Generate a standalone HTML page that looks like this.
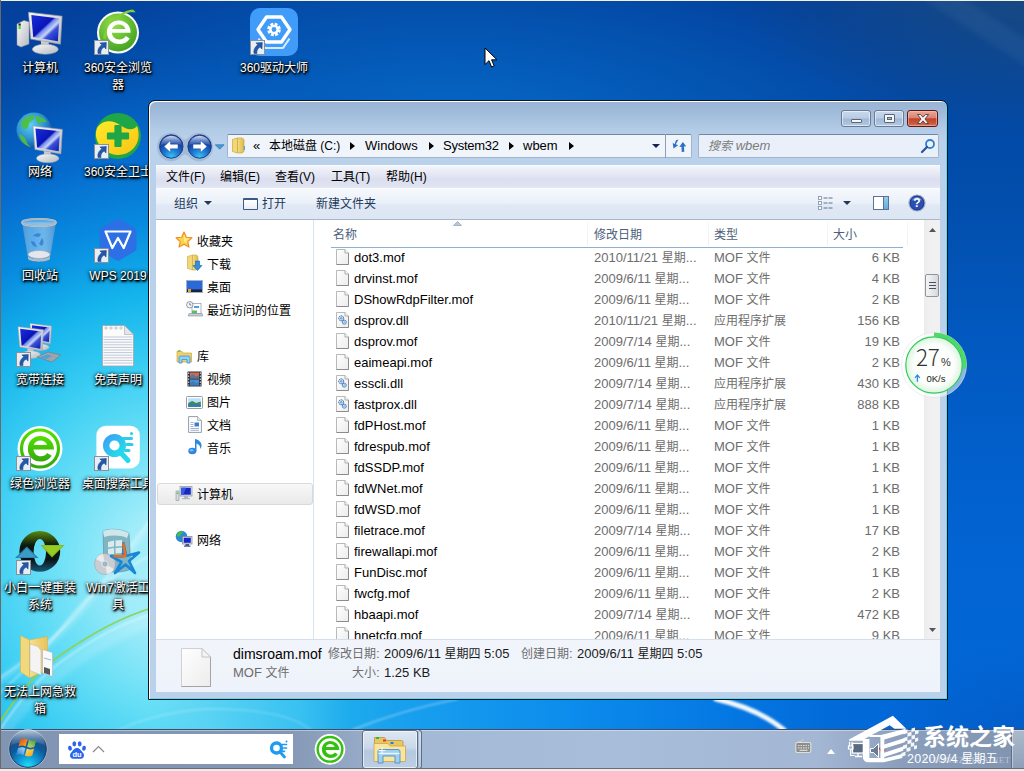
<!DOCTYPE html>
<html lang="zh-CN">
<head>
<meta charset="utf-8">
<title>wbem</title>
<style>
*{box-sizing:border-box;margin:0;padding:0}
html,body{width:1024px;height:771px;overflow:hidden}
body{position:relative;font-family:"Liberation Sans","Noto Sans CJK SC",sans-serif;font-size:13px;color:#000;background:#0a5cc0}
i{font-style:normal;font-size:12px}
.abs{position:absolute}
#wall{position:absolute;left:0;top:0;width:1024px;height:771px;
background:
  radial-gradient(ellipse 220px 130px at 1070px 770px, rgba(2,78,176,.6) 0%, rgba(2,78,176,0) 100%),
  radial-gradient(ellipse 320px 150px at 1050px -20px, rgba(30,76,120,.85) 0%, rgba(30,76,120,0) 100%),
  radial-gradient(circle 525px at 190px 570px, rgba(170,240,250,1) 0%, rgba(160,236,250,1) 13.300%, rgba(105,223,246,1) 26.700%, rgba(58,205,243,1) 40%, rgba(20,180,236,1) 53.300%, rgba(8,140,224,.97) 66.700%, rgba(6,110,210,.85) 80%, rgba(4,92,190,.4) 93%, rgba(4,88,186,0) 100%),
  radial-gradient(ellipse 480px 220px at 450px 150px, rgba(6,110,205,.9) 0%, rgba(6,110,205,0) 100%),
  linear-gradient(180deg, rgb(3,64,156) 0px, rgb(3,72,164) 100px, rgb(2,78,172) 200px, rgb(2,88,190) 330px, rgb(2,92,198) 400px, rgb(2,100,210) 550px, rgb(2,103,215) 730px);}
/* desktop icons */
.dl{position:absolute;margin-top:0;width:100px;text-align:center;color:#fff;font-size:12px;line-height:17px;
 text-shadow:1px 1px 1px #000,1px 2px 2px rgba(0,0,0,.9),0 0 3px rgba(0,0,0,.85),0 1px 4px rgba(0,0,0,.7);white-space:nowrap}
.dl i{font-size:12px}
.ico{position:absolute;overflow:visible}
/* window */
#win{position:absolute;left:148px;top:100px;width:800px;height:600px;border:1px solid #0c1420;border-radius:7px 7px 0 0;
 background:linear-gradient(180deg,#98b3d3 0px,#a3bedc 14px,#b2cbe6 28px,#b9d1ea 40px,#b9d1ea 100%);
 box-shadow:inset 1px 1px 0 #fdfeff, inset -1px -1px 0 #4fe0f8;overflow:hidden}
#win .cb{position:absolute;top:9px;width:30px;height:17px;border:1px solid #6a7a92;border-radius:3px;
 background:linear-gradient(180deg,#c8d9ec 0%,#b8cce4 48%,#9fb8d6 52%,#b3c9e2 100%);box-shadow:inset 0 0 0 1px rgba(255,255,255,.55)}
#win .cb.x{border-color:#5a1a14;background:linear-gradient(180deg,#e8a99c 0%,#d98472 45%,#c3432a 52%,#c8553a 80%,#d8745a 100%);box-shadow:inset 0 0 0 1px rgba(255,200,190,.5)}
#addr{position:absolute;left:78px;top:33px;width:465px;height:24px;border:1px solid #a4b3c8;border-top-color:#76869e;border-radius:2px;background:#f0f5fc}
#addr span{position:absolute;top:3px;line-height:16px;white-space:nowrap;color:#000}
#addr .ar{position:absolute;top:6.500px;width:0;height:0;border-left:5px solid #000;border-top:4.500px solid transparent;border-bottom:4.500px solid transparent}
#srch{position:absolute;left:549px;top:33px;width:241px;height:24px;border:1px solid #a4b3c8;border-top-color:#76869e;border-radius:2px;background:#e9f0f9}
#menu{position:absolute;left:7px;top:64px;width:784px;height:23px;border-top:1px solid #fbfcfe;
 background:linear-gradient(180deg,#f3f5fb 0%,#e6e9f4 35%,#dcdfef 60%,#dde1f0 80%,#e3e8f4 100%)}
#menu span{position:absolute;top:3px;line-height:16px;white-space:nowrap;font-size:12px}
#tool{position:absolute;z-index:2;left:7px;top:87px;width:784px;height:32px;border-top:1px solid #fafcfe;border-bottom:1px solid #a9b7c9;
 background:linear-gradient(180deg,#f6f9fd 0%,#ebf1f9 45%,#dfe8f4 55%,#dde7f3 100%)}
#tool span{position:absolute;top:7.400px;line-height:16px;color:#1e395b;white-space:nowrap}
#cont{position:absolute;left:7px;top:118px;width:784px;height:420px;background:#fff;overflow:hidden}
#nav{position:absolute;left:0;top:0;width:158px;height:420px;background:#fff;border-right:1px solid #d6e5f5}
#nav span{position:absolute;line-height:16px;white-space:nowrap;margin-top:1px}
#list{position:absolute;left:159px;top:0;width:609px;height:420px;overflow:hidden}
#list .hd{position:absolute;top:8px;line-height:16px;color:#4c607a}
#list .vs{position:absolute;top:2px;width:1px;height:24px;background:linear-gradient(180deg,#f8fafc,#e9eef4)}
.row{position:absolute;left:0;width:609px;height:21px;line-height:22px;white-space:nowrap}
.row .fi{position:absolute;left:21px;top:2px}
.row .fn{position:absolute;left:39px;top:0;color:#000}
.row .fd{position:absolute;left:279px;top:0;color:#6d6d6d}
.row .ft{position:absolute;left:399px;top:0;color:#6d6d6d}
.row .fs{position:absolute;right:24px;top:0;color:#6d6d6d}
#sb{position:absolute;left:768px;top:0;width:16px;height:420px;background:linear-gradient(90deg,#ececec 0,#f0f0f0 30%,#f1f1f1 100%)}
#det{position:absolute;left:7px;top:538px;width:784px;height:53px;border-top:1px solid #d5dfec;background:linear-gradient(180deg,#f1f5fb 0%,#eef2fa 100%)}
#det span{position:absolute;line-height:16px;white-space:nowrap;margin-top:1px}
/* taskbar */
#task{position:absolute;left:0;top:729px;width:1024px;height:39px;border-top:1px solid #3f4e66;
 background:linear-gradient(90deg,#8195b2 0%,#8498b5 28%,#a4b9d6 41%,#a8bdda 60%,#a3b7d4 80%,#8b9fbc 88%,#8094b0 100%)}
#task:before{content:"";position:absolute;left:0;top:0;width:100%;height:1px;background:rgba(255,255,255,.4)}

#srch i{font-style:italic}
#bstrip{position:absolute;left:148px;top:690px;width:800px;height:40px;
 background:linear-gradient(90deg, rgba(94,216,245,0) 0px, rgba(88,210,244,.9) 60px, rgb(56,193,241) 152px, rgb(30,171,237) 202px, rgb(25,160,238) 252px, rgb(12,140,236) 422px, rgb(4,118,226) 592px, rgba(2,106,217,1) 690px, rgba(2,103,215,0) 790px)}

</style>
</head>
<body>
<div id="wall"></div>
<svg width="0" height="0" style="position:absolute">
<defs>
<g id="sc"><rect x=".5" y=".5" width="14" height="14" fill="#e6eef8" stroke="#8b8f96"/><path d="M12.300 2.500l-6.400 .4 2 1.900c-3 2-4.600 5-3.900 8.700l3 .1c-.6-2.800 .6-5 3.100-6.500l1.900 2z" fill="#2458a8" stroke="#173b7a" stroke-width=".5"/></g>
<linearGradient id="gscr" x1="0" y1="0" x2="1" y2="1"><stop offset="0" stop-color="#1a2fd8"/><stop offset=".45" stop-color="#0a14b8"/><stop offset=".5" stop-color="#6f86ea"/><stop offset=".62" stop-color="#c8d4f8"/><stop offset=".7" stop-color="#3a50d8"/><stop offset="1" stop-color="#0818b0"/></linearGradient>
<linearGradient id="gsil" x1="0" y1="0" x2="1" y2="1"><stop offset="0" stop-color="#fafafa"/><stop offset="1" stop-color="#b4b8be"/></linearGradient>
<radialGradient id="gg360" cx=".4" cy=".3" r=".8"><stop offset="0" stop-color="#9adf4a"/><stop offset=".6" stop-color="#5cb82e"/><stop offset="1" stop-color="#3f9a22"/></radialGradient>
<radialGradient id="gglobe" cx=".4" cy=".35" r=".7"><stop offset="0" stop-color="#5fd0f0"/><stop offset=".6" stop-color="#2a8fd0"/><stop offset="1" stop-color="#1a4a9a"/></radialGradient>
<linearGradient id="gbin" x1="0" y1="0" x2="1" y2="0"><stop offset="0" stop-color="#5f9fd8" stop-opacity=".8"/><stop offset=".3" stop-color="#a8d4f4" stop-opacity=".5"/><stop offset=".6" stop-color="#cfe8fa" stop-opacity=".5"/><stop offset="1" stop-color="#5a98d2" stop-opacity=".8"/></linearGradient>
<linearGradient id="gyel" x1="0" y1="0" x2="1" y2="1"><stop offset="0" stop-color="#ffe92a"/><stop offset="1" stop-color="#f8c414"/></linearGradient>
<linearGradient id="gfolder" x1="0" y1="0" x2="1" y2="0"><stop offset="0" stop-color="#f7e08c"/><stop offset="1" stop-color="#e8c35a"/></linearGradient>
<linearGradient id="gge" x1="0" y1="0" x2="0" y2="1"><stop offset="0" stop-color="#52e000"/><stop offset="1" stop-color="#34a80e"/></linearGradient>
<linearGradient id="gq" x1="0" y1="0" x2="1" y2="1"><stop offset="0" stop-color="#3aa2f8"/><stop offset="1" stop-color="#22e0e8"/></linearGradient>
<linearGradient id="gxb" x1="0" y1="0" x2="0" y2="1"><stop offset="0" stop-color="#5a8a10"/><stop offset=".35" stop-color="#0c1a0c"/><stop offset=".7" stop-color="#0a1418"/><stop offset="1" stop-color="#1a5a7a"/></linearGradient>
<g id="monitor">
 <path d="M0 2l30 3.500-1.500 25-26.500-4.500z" fill="url(#gsil)" stroke="#9a9ea6" stroke-width=".6"/>
 <path d="M2.500 4.500l25 3-1.300 20.300-22-3.800z" fill="url(#gscr)"/>
 <path d="M11 27.500l7 1.200.5 4.500h-7z" fill="#c9ccd2"/>
 <ellipse cx="15" cy="35" rx="11.500" ry="4.500" fill="url(#gsil)" stroke="#a2a6ae" stroke-width=".5"/>
</g>
</defs>
</svg>
<div id="bstrip"></div>
<svg class="abs" style="left:0;top:0" width="1024" height="730" viewBox="0 0 1024 730">
 <defs><filter id="bl1" x="-5%" y="-5%" width="110%" height="110%"><feGaussianBlur stdDeviation="1.200"/></filter><filter id="bl2" x="-5%" y="-5%" width="110%" height="110%"><feGaussianBlur stdDeviation="2.500"/></filter></defs>
 <g fill="none" stroke-linecap="round">
  <path d="M-2 681C30 660 60 636 80 612s50-62 70-88" stroke="#fff" stroke-opacity=".28" stroke-width="5" filter="url(#bl2)"/>
  <path d="M-2 679C30 658 60 634 80 610s50-62 70-90" stroke="#fff" stroke-opacity=".45" stroke-width="1.200" filter="url(#bl1)"/>
  <path d="M-2 694C20 676 45 650 70 618s55-50 80-62" stroke="#fff" stroke-opacity=".3" stroke-width="2.500" filter="url(#bl1)"/>
  <path d="M-2 738C14 716 36 690 62 670s56-38 90-50" stroke="#fff" stroke-opacity=".16" stroke-width="14" filter="url(#bl2)"/><path d="M0 730C14 708 36 680 62 661s56-37 90-47" stroke="#fff" stroke-opacity=".5" stroke-width="1.600" filter="url(#bl1)"/><path d="M0 722C14 700 36 672 62 654s56-36 90-46" stroke="#8ed24a" stroke-opacity=".95" stroke-width="1.800"/>
  <path d="M118 730c30-14 70-22 105-21s70 6 88 21" stroke="#fff" stroke-opacity=".22" stroke-width="1.600" filter="url(#bl1)"/>
  <path d="M352 730c30-12 70-24 106-31" stroke="#fff" stroke-opacity=".38" stroke-width="1.600" filter="url(#bl1)"/>
  <path d="M716 699c26 6 50 16 68 31" stroke="#fff" stroke-opacity=".95" stroke-width="5" filter="url(#bl1)"/>
  <path d="M930 -10L1040 62" stroke="#fff" stroke-opacity=".045" stroke-width="22" filter="url(#bl2)"/>
 </g>
</svg>
<!-- row 1 -->
<svg class="ico" style="left:16px;top:8px" width="48" height="48" viewBox="0 0 48 48">
 <path d="M1 16l7-3.500 5 1.500v22l-8 3-4-2z" fill="url(#gsil)" stroke="#9a9ea6" stroke-width=".5"/><rect x="2.500" y="17.500" width="2.200" height="3.500" fill="#3fe020"/><rect x="2.500" y="15.500" width="2.200" height="2" fill="#222"/>
 <g transform="translate(12.500,2) scale(1.120)"><use href="#monitor"/></g>
</svg>
<div class="dl" style="left:-10px;top:60px">计算机</div>

<svg class="ico" style="left:94px;top:8px" width="48" height="48" viewBox="0 0 48 48">
 <circle cx="24" cy="24.500" r="21" fill="#fff"/><circle cx="24" cy="24.500" r="19" fill="url(#gg360)"/>
 <path d="M9 30C13 14 24 4 38 1.500c1.500 0 3 1.500 3.500 3C33 2.500 19 9 11.500 31z" fill="#7fd038"/>
 <path d="M36.500 24.800H17.800c.6 4 3.400 6.700 7.400 6.700 3 0 5.200-1.200 6.600-3.400l4 2.300c-2.300 3.700-6 5.700-10.700 5.700-7 0-12.200-5-12.200-11.800S18 12.600 24.800 12.600c6.800 0 11.800 5 11.800 11.400zM18 21h13.500c-.8-2.800-3.300-4.600-6.700-4.600S18.900 18.200 18 21z" fill="#fff"/>
 <use href="#sc" x="0" y="32"/>
</svg>
<div class="dl" style="left:68px;top:60px">360安全浏览<br>器</div>

<svg class="ico" style="left:250px;top:8px" width="48" height="48" viewBox="0 0 48 48">
 <rect x="0" y="0" width="48" height="48" rx="10" fill="#409cf8"/>
 <path d="M8.500 30.500l6.500 9.500h18l6.500-9.500" fill="none" stroke="#d8ebff" stroke-width="2.200" stroke-linejoin="round"/>
 <path d="M16.500 9h15l8.500 12.500-8.500 12.500h-15l-8.500-12.500z" fill="#409cf8" stroke="#fff" stroke-width="3.400" stroke-linejoin="round"/>
 <circle cx="24" cy="21.500" r="5" fill="none" stroke="#fff" stroke-width="3.600" stroke-dasharray="2.600 1.330"/><circle cx="24" cy="21.500" r="3.600" fill="none" stroke="#fff" stroke-width="2.400"/>
 <use href="#sc" x="0" y="32"/>
</svg>
<div class="dl" style="left:224px;top:60px">360驱动大师</div>

<!-- row 2 -->
<svg class="ico" style="left:16px;top:112px" width="48" height="48" viewBox="0 0 48 48">
 <circle cx="18" cy="18" r="17.500" fill="url(#gglobe)"/>
 <path d="M5 10c4-5 9-7 13-7 2 3-2 5-4 7s-1 6-4 7-5-3-5-7zM20 4c5 0 9 3 11 6-2 1-5-1-7 1s-4-1-4-7zM3 22c3 1 6 3 7 6s2 5 5 7c-6-1-11-6-12-13z" fill="#4fc03a" opacity=".9"/>
 <g transform="translate(17,12) scale(.98)"><use href="#monitor"/></g>
</svg>
<div class="dl" style="left:-10px;top:164px">网络</div>

<svg class="ico" style="left:94px;top:112px" width="48" height="48" viewBox="0 0 48 48">
 <circle cx="24" cy="24" r="23" fill="#1fa647"/>
 <path d="M3 16C9 7 19 8 26 13c7 5 13 6 17 1 3 8 2 17-4 23-7 7-19 8-27 2C3 33 0 24 3 16z" fill="url(#gyel)"/>
 <path d="M21.500 14h5v7.500H34v5h-7.500V34h-5v-7.500H14v-5h7.500z" fill="#1fa647" stroke="#1fa647" stroke-width="2.200" stroke-linejoin="round"/>
 <use href="#sc" x="0" y="32"/>
</svg>
<div class="dl" style="left:68px;top:164px">360安全卫士</div>

<!-- row 3 -->
<svg class="ico" style="left:16px;top:216px" width="48" height="48" viewBox="0 0 48 48">
 <path d="M6.500 6.500l5.500 34c4 3.500 18 3.500 22 0l5.500-34z" fill="url(#gbin)" stroke="#6f9fc8" stroke-width=".6"/>
 <ellipse cx="23" cy="38.500" rx="11" ry="4" fill="#e4e8ee" stroke="#9aa2ae" stroke-width=".6"/>
 <path d="M12 40.500c3 3.500 19 3.500 22 0v2.500c-3 3.500-19 3.500-22 0z" fill="#b4bac4"/>
 <ellipse cx="23" cy="6.500" rx="17" ry="3.600" fill="#9fd0f2" fill-opacity=".55" stroke="#c8ccd2" stroke-width="1.800"/>
 <ellipse cx="23" cy="6.500" rx="17" ry="3.600" fill="none" stroke="#8a8e96" stroke-width=".5"/>
 <path d="M17 20a6 6 0 0 1 8-2l-2 3zM26 22a6 6 0 0 1 0 8l-3-2zM21 31a6 6 0 0 1-6-6l3.500 1z" fill="#2f6fd0" opacity=".7"/>
</svg>
<div class="dl" style="left:-10px;top:268px">回收站</div>

<svg class="ico" style="left:94px;top:216px" width="48" height="48" viewBox="0 0 48 48">
 <path d="M22 3.500a4 4 0 0 1 4 0l14.500 8.300a4 4 0 0 1 2 3.500v16.800a4 4 0 0 1-2 3.500L26 43.900a4 4 0 0 1-4 0L7.500 35.600a4 4 0 0 1-2-3.500V15.300a4 4 0 0 1 2-3.500z" fill="#2d6fe4"/>
 <path d="M11.500 15.500h25l-6.800 16.500-5.700-10-5.700 10z" fill="none" stroke="#fff" stroke-width="2.200" stroke-linejoin="round"/>
 <use href="#sc" x="0" y="32"/>
</svg>
<div class="dl" style="left:68px;top:268px">WPS 2019</div>

<!-- row 4 -->
<svg class="ico" style="left:16px;top:320px" width="48" height="48" viewBox="0 0 48 48">
 <g transform="translate(14,2) scale(.72)"><use href="#monitor"/></g>
 <g transform="translate(2,5) scale(.85)"><use href="#monitor"/></g>
 <path d="M21 37l11-5 13 3-9 7z" fill="#9ea4ac" stroke="#6a7078" stroke-width=".5"/><path d="M24 37.500l7-3 5 1.500-6 3z" fill="#4f9fd8"/>
 <use href="#sc" x="0" y="32"/>
</svg>
<div class="dl" style="left:-10px;top:372px">宽带连接</div>

<svg class="ico" style="left:94px;top:320px" width="48" height="48" viewBox="0 0 48 48">
 <path d="M8.500 5.500h22l9 9v31.500h-31z" fill="#fbfbfb" stroke="#a2a6ac" stroke-width=".8"/>
 <path d="M30.500 5.500v9h9z" fill="#e4e6ea" stroke="#a2a6ac" stroke-width=".6"/>
 <g stroke="#b7c3d6" stroke-width=".9"><path d="M9.500 17h29M9.500 19.600h29M9.500 22.200h29M9.500 24.800h29M9.500 27.400h29M9.500 30h29M9.500 32.600h29M9.500 35.200h29M9.500 37.800h29M9.500 40.400h29M9.500 43h29"/></g>
 <g fill="#fff" stroke="#9aa0a8" stroke-width=".6"><circle cx="12" cy="8" r="1.200"/><circle cx="17" cy="8" r="1.200"/><circle cx="22" cy="8" r="1.200"/><circle cx="27" cy="8" r="1.200"/></g>
</svg>
<div class="dl" style="left:68px;top:372px">免责声明</div>

<!-- row 5 -->
<svg class="ico" style="left:16px;top:424px" width="48" height="48" viewBox="0 0 48 48">
 <circle cx="24" cy="24.500" r="22.500" fill="#fff"/><circle cx="24" cy="24.500" r="18.500" fill="none" stroke="url(#gge)" stroke-width="3.200"/>
 <path d="M38 25.500H17.500c.6 4.200 3.400 6.800 7.300 6.800 2.800 0 4.900-1.100 6.300-3.200l4.600 2.600c-2.400 3.800-6.200 5.800-11 5.800-7.400 0-12.800-5.200-12.800-12.600S17 12 24.300 12c7.400 0 13.700 5.500 13.700 13.500zM17.800 21H31c-.9-2.800-3.300-4.500-6.600-4.500s-5.700 1.700-6.600 4.500z" fill="url(#gge)"/>
 <use href="#sc" x="0" y="32"/>
</svg>
<div class="dl" style="left:-10px;top:476px">绿色浏览器</div>

<svg class="ico" style="left:94px;top:424px" width="48" height="48" viewBox="0 0 48 48">
 <rect x="2.400" y="1.800" width="43.400" height="42.600" rx="9.500" fill="#fff"/>
 <circle cx="20.500" cy="21.500" r="8.300" fill="none" stroke="url(#gq)" stroke-width="6.400"/>
 <path d="M27.500 29.500l6.500 7" stroke="#22d8ea" stroke-width="5" stroke-linecap="round"/>
 <path d="M29.500 14.500h8M33 20.500h5M31.500 26.500h3.500" stroke="#2ccdec" stroke-width="3" stroke-linecap="round"/><circle cx="37.500" cy="9.500" r="1.600" fill="#2ccdec"/>
 <use href="#sc" x="0" y="32"/>
</svg>
<div class="dl" style="left:68px;top:476px">桌面搜索工具</div>

<!-- row 6 -->
<svg class="ico" style="left:16px;top:528px" width="48" height="48" viewBox="0 0 48 48">
 <path fill-rule="evenodd" d="M23.800 3A20.400 20.400 0 1 0 23.800 43.800 20.400 20.400 0 1 0 23.800 3zM23.800 11a6.200 13.200 0 1 1 0 26.400 6.200 13.200 0 1 1 0-26.400z" fill="url(#gxb)"/>
 <path d="M24.500 17h24L36 29.500z" fill="#7fb81c"/><path d="M26.500 17.800h20L36 28z" fill="#96cc22"/>
 <path d="M-1 30h23.500L10.800 18.500z" fill="#2a7fa8"/><path d="M1.500 29.200h18.500L10.800 20z" fill="#3a9ac8"/>
 <use href="#sc" x="0" y="32"/>
</svg>
<div class="dl" style="left:-10px;top:580px">小白一键重装<br>系统</div>

<svg class="ico" style="left:94px;top:528px" width="48" height="48" viewBox="0 0 48 48">
 <path d="M9 3c8-3 18-2 26 2l2 36c-8 4-18 4-27 1z" fill="#7fb6c2" stroke="#5a8e9a" stroke-width=".6"/>
 <path d="M9 3c8-3 18-2 26 2l-2 5c-7-3-15-3-23-1z" fill="#cfe6ea"/>
 <path d="M14 14l6-1.500v6l-6 1zM21.500 12.500l6.500-.5v6l-6.500.5zM14 21l6-1v6l-6 .5zM21.500 20l6.500-.5v5.500l-6.500.5z" fill="#e8f4f6" opacity=".85"/>
 <circle cx="11" cy="36" r="10.500" fill="#c9ccd0" stroke="#9a9ea4" stroke-width=".5"/><path d="M11 36L2 31a10.500 10.500 0 0 1 7-5.300zM11 36l9 5a10.500 10.500 0 0 1-7 5.300z" fill="#f2f2f4" opacity=".8"/><circle cx="11" cy="36" r="3.200" fill="#9fb8c8" stroke="#e8e8e8" stroke-width="1"/>
 <path d="M29.500 15l2.500 13 13-3.500-10 8.500 6 12-9.500-8.500L21 45l6.500-11-10.500-6 12 .5z" fill="none" stroke="#1a86d8" stroke-width="2.600" stroke-linejoin="round"/>
 <path d="M29.500 16l1.800 12-11 .2" fill="none" stroke="#f06a1a" stroke-width="2.600" stroke-linecap="round" stroke-linejoin="round"/>
</svg>
<div class="dl" style="left:68px;top:580px">Win7激活工<br>具</div>

<!-- row 7 -->
<svg class="ico" style="left:16px;top:632px" width="48" height="48" viewBox="0 0 48 48">
 <path d="M4.500 3.500l9 4.500v38l-9-6z" fill="#f1d87c" stroke="#cfae4a" stroke-width=".5"/>
 <path d="M13.500 8l18-3.500v33l-18 8.500z" fill="url(#gfolder)" stroke="#cfae4a" stroke-width=".5"/>
 <path d="M14 12l8 2.500 3 4v24.500l-11-4.500z" fill="#f4f4f4" stroke="#b4b4b4" stroke-width=".5"/>
 <path d="M26.500 17.500l10 3v24l-10-3.500z" fill="#fafafa" stroke="#a9a9a9" stroke-width=".5"/>
 <path d="M28 35l6 2v6l-6-2z" fill="#555"/><path d="M28 26l7 2" stroke="#9ab6d8" stroke-width="1"/>
</svg>
<div class="dl" style="left:-10px;top:684px">无法上网急救<br>箱</div>

<!-- cursor -->
<svg class="abs" style="left:484px;top:47px" width="14" height="22" viewBox="0 0 14 22"><path d="M1 1v16.500l4-3.800 2.600 6.300 2.600-1.100-2.600-6.100h5.400z" fill="#fff" stroke="#000" stroke-width="1"/></svg>

<svg width="0" height="0" style="position:absolute">
<defs>
<linearGradient id="gpaper" x1="0" y1="0" x2="1" y2="1"><stop offset="0" stop-color="#ffffff"/><stop offset="1" stop-color="#ececec"/></linearGradient>
<g id="imof"><path d="M.5 .5h8.500l3.500 3.500v11.500h-12z" fill="url(#gpaper)" stroke="#b9b9b9" stroke-width="1"/><path d="M.5 15.500h12v-11.500" fill="none" stroke="#8c8c8c" stroke-width="1"/><path d="M9 .5v3.500h3.500" fill="#fafafa" stroke="#ababab" stroke-width="1"/></g>
<g id="idll"><use href="#imof"/><circle cx="5.200" cy="6.300" r="2.500" fill="#dfeaf8" stroke="#2f66a8" stroke-width="1" stroke-dasharray="1.600 .6"/><circle cx="5.200" cy="6.300" r=".8" fill="#fff" stroke="#2f66a8" stroke-width=".7"/><circle cx="8.300" cy="10.200" r="2" fill="#e6f0fb" stroke="#3f7cc0" stroke-width=".9"/><circle cx="8.300" cy="10.200" r=".6" fill="#fff" stroke="#3f7cc0" stroke-width=".5"/></g>
<radialGradient id="gnavb" cx="0.5" cy="0.95" r="0.9"><stop offset="0" stop-color="#38c6f4"/><stop offset="0.35" stop-color="#1d7fd6"/><stop offset="0.7" stop-color="#1546a8"/><stop offset="1" stop-color="#26428f"/></radialGradient>
<linearGradient id="gnavh" x1="0" y1="0" x2="0" y2="1"><stop offset="0" stop-color="#dfe9f8" stop-opacity=".95"/><stop offset="1" stop-color="#7fa2dc" stop-opacity=".2"/></linearGradient>
<linearGradient id="gfold" x1="0" y1="0" x2="1" y2="0"><stop offset="0" stop-color="#f3dc86"/><stop offset="1" stop-color="#e0b84a"/></linearGradient>
</defs>
</svg>
<div id="win">
 <!-- caption buttons -->
 <div class="cb" style="left:692px"><div class="abs" style="left:9px;top:8px;width:11px;height:4px;background:#f4f6f8;border:1px solid #5a6578;border-radius:1px"></div></div>
 <div class="cb" style="left:725px"><div class="abs" style="left:9px;top:3px;width:11px;height:9px;background:#f4f6f8;border:1px solid #5a6578;border-radius:1px"></div><div class="abs" style="left:12px;top:6px;width:5px;height:3px;background:#a9bed8;border:1px solid #5a6578"></div></div>
 <div class="cb x" style="left:758px;width:31px"><svg class="abs" style="left:8px;top:2px" width="14" height="12" viewBox="0 0 14 12"><path d="M1.5 1.5h3L7 4.2 9.5 1.5h3L9 6l3.5 4.5h-3L7 7.8 4.5 10.5h-3L5 6z" fill="#f6f6f6" stroke="#5a3a3a" stroke-width="0.9" stroke-linejoin="round"/></svg></div>

 <!-- nav buttons -->
 <svg class="abs" style="left:6px;top:30px" width="74" height="32" viewBox="0 0 74 32">
  <path d="M2 16a14 14 0 0 1 25-9q3 3 6 0a14 14 0 0 1 25 9 14 14 0 0 1-25 9q-3-3-6 0a14 14 0 0 1-25-9z" fill="#9fb3cd" opacity=".75"/>
  <circle cx="16.3" cy="15.5" r="11.7" fill="url(#gnavb)" stroke="#1d3f8a" stroke-width="1"/>
  <path d="M5.6 14a10.8 10.8 0 0 1 21.4 0q-10.700 -3.500 -21.400 0z" fill="url(#gnavh)"/>
  <path d="M9 15.500l6.500 -6v3.700h7.500v4.600h-7.500v3.700z" fill="#fff" stroke="#2c4f9c" stroke-width=".5"/>
  <circle cx="44.600" cy="15.500" r="11.700" fill="url(#gnavb)" stroke="#1d3f8a" stroke-width="1"/>
  <path d="M33.900 14a10.800 10.800 0 0 1 21.400 0q-10.700 -3.500 -21.400 0z" fill="url(#gnavh)"/>
  <path d="M52 15.500l-6.500 -6v3.700h-7.500v4.600h7.500v3.700z" fill="#fff" stroke="#2c4f9c" stroke-width=".5"/>
  <path d="M60.300 13.800h8.800l-4.400 4.400z" fill="#3f9fdc" stroke="#2a62a8" stroke-width=".6"/>
 </svg>

 <!-- address bar -->
 <div id="addr">
  <svg class="abs" style="left:3px;top:2px" width="16" height="18" viewBox="0 0 16 18"><path d="M1.500 2.500l5 -1.500v15l-5 -1.500z" fill="#f2d874" stroke="#c9a63c" stroke-width=".7"/><path d="M6.500 1h4.500l2 1.500v12l-2 1.500h-4.500z" fill="url(#gfold)" stroke="#c9a63c" stroke-width=".7"/><rect x="12.600" y="9" width="1.400" height="4" fill="#5fa7e0"/></svg>
  <span style="left:25px;font-size:13px">«</span>
  <span style="left:41px;font-size:12px"><i>本地磁盘</i> (C:)</span>
  <div class="ar" style="left:122px"></div>
  <span style="left:137px">Windows</span>
  <div class="ar" style="left:201px"></div>
  <span style="left:215px;letter-spacing:-.25px">System32</span>
  <div class="ar" style="left:281px"></div>
  <span style="left:295px">wbem</span>
  <div class="ar" style="left:341px"></div>
  <div class="abs" style="left:424px;top:9px;width:0;height:0;border-top:4px solid #14225a;border-left:4px solid transparent;border-right:4px solid transparent"></div>
  <div class="abs" style="left:437px;top:-1px;width:1px;height:24px;background:#8f9fb6"></div>
  <svg class="abs" style="left:443px;top:3px" width="16" height="16" viewBox="0 0 16 16"><path d="M7.500 1.500L4.800 6.300l2.400 1-4.700 3.200-.8-5.400 1.900.8L5 2.300z" fill="#2f6fc4"/><path d="M11.800 4l3.400 4.300-2.200.2.300 5.300-2.600.2-.2-5.300-2.200.2z" fill="#2f6fc4"/></svg>
 </div>
 <!-- search -->
 <div id="srch">
  <span class="abs" style="left:9px;top:3px;line-height:16px;color:#7c7c7c;font-style:italic;white-space:nowrap"><i>搜索</i> wbem</span>
  <svg class="abs" style="left:221px;top:3px" width="16" height="16" viewBox="0 0 16 16"><circle cx="10" cy="6" r="4" fill="#eaf3fc" stroke="#2f7fd0" stroke-width="1.800"/><path d="M7 9l-5 5" stroke="#274f9a" stroke-width="2.200" stroke-linecap="round"/></svg>
 </div>

 <!-- menu -->
 <div id="menu">
  <span style="left:10px"><i>文件</i>(F)</span><span style="left:64px"><i>编辑</i>(E)</span><span style="left:119px"><i>查看</i>(V)</span><span style="left:175px"><i>工具</i>(T)</span><span style="left:230px"><i>帮助</i>(H)</span>
 </div>
 <!-- toolbar -->
 <div id="tool">
  <span style="left:18px"><i>组织</i></span>
  <div class="abs" style="left:48px;top:12px;width:0;height:0;border-top:4px solid #1e395b;border-left:4px solid transparent;border-right:4px solid transparent"></div>
  <div class="abs" style="left:87px;top:9px;width:15px;height:12px;border:1px solid #3b5a86;border-top-width:2px;border-radius:1px;background:linear-gradient(180deg,#fff,#e8eef8)"></div>
  <span style="left:106px"><i>打开</i></span>
  <span style="left:160px"><i>新建文件夹</i></span>
  <!-- view -->
  <svg class="abs" style="left:662px;top:7px" width="16" height="14" viewBox="0 0 16 14"><g fill="#fff" stroke="#7d8ea8" stroke-width=".8"><rect x=".5" y=".5" width="3" height="3"/><rect x=".5" y="5.500" width="3" height="3"/><rect x=".5" y="10.500" width="3" height="3"/></g><g stroke="#5f6f88" stroke-width="1"><path d="M5.500 2h9M5.500 7h9M5.500 12h9" stroke-dasharray="4 1"/></g></svg>
  <div class="abs" style="left:687px;top:12px;width:0;height:0;border-top:4px solid #1e395b;border-left:4px solid transparent;border-right:4px solid transparent"></div>
  <div class="abs" style="left:717px;top:7px;width:16px;height:14px;border:1px solid #5f7391;background:#fff"><div class="abs" style="right:0;top:0;width:5px;height:12px;background:linear-gradient(180deg,#8fd0ee,#5fb0dc);border-left:1px solid #5f7391"></div></div>
  <svg class="abs" style="left:752px;top:5px" width="18" height="18" viewBox="0 0 18 18"><circle cx="9" cy="9" r="8" fill="#2a4fb0" stroke="#9aa8c8" stroke-width="1.200"/><circle cx="9" cy="9" r="6.800" fill="none" stroke="#1d3a8c" stroke-width=".8"/><path d="M4 6.500a5.500 5.500 0 0 1 10 0q-5-2-10 0z" fill="#fff" opacity=".35"/><text x="9" y="13.200" font-family="Liberation Sans,sans-serif" font-size="12" font-weight="bold" fill="#fff" text-anchor="middle">?</text></svg>
 </div>

 <!-- content -->
 <div id="cont">
  <div id="nav">
   <div class="abs" style="left:1px;top:264px;width:156px;height:22px;border:1px solid #d9d9d9;border-radius:3px;background:linear-gradient(180deg,#f8f8f8,#e9e9e9)"></div>
   
   <svg class="abs" style="left:19px;top:12px" width="18" height="17" viewBox="0 0 18 17"><path d="M9 1l2.400 5.200 5.600 .6-4.200 3.800 1.200 5.500L9 13.300 4 16.100l1.200-5.500L1 6.800l5.600-.6z" fill="#fcd34a" stroke="#f08a1a" stroke-width="1.100" stroke-linejoin="round"/><path d="M9 3.500l1.600 3.600 3.600.4-2.700 2.400.6 2.400L9 10.800z" fill="#fff2a8" opacity=".7"/></svg>
   <svg class="abs" style="left:30px;top:35px" width="18" height="18" viewBox="0 0 18 18"><path d="M1.500 2.500l5-1.500v15l-5-1.500z" fill="#f2d874" stroke="#c9a63c" stroke-width=".6"/><path d="M6.500 1h4l1.500 1.500v11.500l-1.500 2h-4z" fill="url(#gfold)" stroke="#c9a63c" stroke-width=".6"/><path d="M9.500 7h4v4.500h2.500l-4.500 5-4.500-5h2.500z" fill="#2f8fe0" stroke="#1a5fb0" stroke-width=".6"/></svg>
   <svg class="abs" style="left:30px;top:61px" width="17" height="13" viewBox="0 0 17 13"><rect x=".5" y=".5" width="16" height="12" fill="#1c50b8" stroke="#9fb0c8" stroke-width="1"/><rect x="1" y="1" width="15" height="8.500" fill="#2a6ad8"/><rect x="1" y="9.500" width="15" height="2.500" fill="#1a2438"/><rect x="2" y="9" width="3" height="3" fill="#e8a030"/></svg>
   <svg class="abs" style="left:30px;top:82px" width="17" height="16" viewBox="0 0 17 16"><rect x="6" y="2.500" width="9" height="10" fill="#fff" stroke="#9aa4b0" stroke-width=".8"/><rect x="8" y="5" width="5" height="2" fill="#4f9fe0"/><path d="M3 12.500h13l1 2.500h-15z" fill="#c8ccd2" stroke="#8a929c" stroke-width=".6"/><rect x="6" y="9.500" width="5" height="3" fill="#5fb870"/><circle cx="3.800" cy="3.800" r="3.200" fill="#f4f6f8" stroke="#7a8490" stroke-width=".8"/><path d="M3.800 2v2h1.500" stroke="#4a5460" stroke-width=".7" fill="none"/></svg>
   <svg class="abs" style="left:20px;top:129px" width="17" height="16" viewBox="0 0 17 16"><path d="M1 3.500h5l1 1.500h8.500v9h-14.500z" fill="#f0d26a" stroke="#c9a63c" stroke-width=".7"/><rect x="2" y="2.300" width="2.500" height="1.200" fill="#3ab84a"/><path d="M3 15v-5.500a1.500 1.500 0 0 1 1.500-1.500h8a1.500 1.500 0 0 1 1.500 1.500v5.500h-3v-3.500h-5v3.500z" fill="#8fd0f4" stroke="#3f8fd0" stroke-width=".8"/></svg>
   <svg class="abs" style="left:31px;top:152px" width="15" height="16" viewBox="0 0 15 16"><rect x=".5" y=".5" width="14" height="15" fill="#2a3038"/><rect x="3" y="1.500" width="9" height="6" fill="#d86a4a"/><rect x="3" y="8.500" width="9" height="6" fill="#4a90d0"/><path d="M3 5l3-2 3 2.500 3-1.500v3.500h-9zM3 12l3-2 3 2.500 3-1.500v3.500h-9z" fill="#3a78b0" opacity=".8"/><path d="M1.700 1.500v13M13.300 1.500v13" stroke="#e8e8e8" stroke-width="1" stroke-dasharray="1.500 1.500"/></svg>
   <svg class="abs" style="left:30px;top:177px" width="17" height="13" viewBox="0 0 17 13"><rect x=".5" y=".5" width="16" height="12" rx="1" fill="#fff" stroke="#8a929c" stroke-width=".9"/><rect x="2.200" y="2.200" width="12.600" height="8.600" fill="#bfe0f4"/><path d="M2.200 7l4-2 4 2 4.600-1.500v5.300h-12.600z" fill="#3f8a5a"/><rect x="2.200" y="8.800" width="12.600" height="2" fill="#2a78c8"/></svg>
   <svg class="abs" style="left:32px;top:197px" width="14" height="17" viewBox="0 0 14 17"><path d="M.6 .6h9l3.800 3.800v12h-12.800z" fill="#fff" stroke="#8a929c" stroke-width=".9"/><path d="M9.600 .6v3.800h3.800" fill="#eef0f4" stroke="#8a929c" stroke-width=".7"/><rect x="6.500" y="6.500" width="4.500" height="4" fill="#3a80c8"/><path d="M2.500 6.500h3M2.500 8.500h3M2.500 10.500h3M2.500 12.500h8.500M2.500 14.300h8.500" stroke="#8f9ec8" stroke-width=".8"/></svg>
   <svg class="abs" style="left:32px;top:219px" width="15" height="17" viewBox="0 0 15 17"><ellipse cx="4.300" cy="13" rx="4" ry="3.300" fill="#2a86e0"/><ellipse cx="3.600" cy="12.200" rx="1.800" ry="1.200" fill="#8fc8f8" opacity=".8"/><path d="M7 13.500v-12.500c3 .5 6.500 3 6.500 6.500 0 1.500-.5 2.500-1.200 3.500.3-3-1.800-5-3.800-5.500v8z" fill="#2a86e0"/></svg>
   <svg class="abs" style="left:19px;top:266px" width="18" height="17" viewBox="0 0 18 17"><rect x="1" y="6" width="3" height="9.500" fill="#d8dce2" stroke="#8a929c" stroke-width=".6"/><rect x="1.700" y="7.500" width="1.500" height="1.500" fill="#3ad030"/><rect x="5" y="1.500" width="12" height="9.500" fill="#e0e4ea" stroke="#8a929c" stroke-width=".7"/><rect x="6.200" y="2.700" width="9.600" height="7" fill="#1428c8"/><path d="M6.200 2.700h5l-3 7h-2z" fill="#3a58e8"/><path d="M9 11h4v2h2v1.200h-8v-1.200h2z" fill="#b0b6c0"/></svg>
   <svg class="abs" style="left:19px;top:311px" width="18" height="18" viewBox="0 0 18 18"><circle cx="6.500" cy="6.500" r="5.800" fill="#2a8ad8"/><path d="M2 4c2-2 4-3 6-2.500 0 2-2 2-2.500 3.500s-1.500 2-3.500 1zM8 7c2-.5 3 .5 3.500 2l-2 2.500c-1-1-2-2.500-1.500-4.500z" fill="#4ac03a"/><rect x="7.500" y="6.500" width="9.500" height="7.500" fill="#e0e4ea" stroke="#7a828c" stroke-width=".7"/><rect x="8.700" y="7.700" width="7.100" height="5.100" fill="#1428c8"/><path d="M10.500 14h3.500v1.500h1.500v1.300h-6.500v-1.300h1.500z" fill="#4a5a88"/></svg>

   <span style="left:41px;top:14px"><i>收藏夹</i></span>
   <span style="left:51px;top:37px"><i>下载</i></span>
   <span style="left:51px;top:60px"><i>桌面</i></span>
   <span style="left:51px;top:83px"><i>最近访问的位置</i></span>
   <span style="left:41px;top:129px"><i>库</i></span>
   <span style="left:51px;top:152px"><i>视频</i></span>
   <span style="left:51px;top:175px"><i>图片</i></span>
   <span style="left:51px;top:198px"><i>文档</i></span>
   <span style="left:51px;top:221px"><i>音乐</i></span>
   <span style="left:41px;top:267px"><i>计算机</i></span>
   <span style="left:41px;top:313px"><i>网络</i></span>
  </div>
  <div id="list">
   <span class="hd" style="left:18px"><i>名称</i></span>
   <span class="hd" style="left:279px"><i>修改日期</i></span>
   <span class="hd" style="left:399px"><i>类型</i></span>
   <span class="hd" style="left:518px"><i>大小</i></span>
   <div class="vs" style="left:272px"></div><div class="vs" style="left:393px"></div><div class="vs" style="left:512px"></div><div class="vs" style="left:592px"></div>
   <div class="abs" style="left:16px;top:28px;width:572px;height:1px;background:#8fb0d4"></div>
   <svg class="abs" style="left:138px;top:2px" width="9" height="5" viewBox="0 0 9 5"><path d="M0.500 4.500l4-4 4 4z" fill="#b8c8dc" stroke="#7f95b0" stroke-width=".6"/></svg>
<div class="row" style="top:28px"><svg class="fi" width="14" height="16" viewBox="0 0 14 16"><use href="#imof"/></svg><span class="fn">dot3.mof</span><span class="fd">2010/11/21 <i>星期</i>...</span><span class="ft">MOF <i>文件</i></span><span class="fs">6 KB</span></div>
<div class="row" style="top:49px"><svg class="fi" width="14" height="16" viewBox="0 0 14 16"><use href="#imof"/></svg><span class="fn">drvinst.mof</span><span class="fd">2009/6/11 <i>星期</i>...</span><span class="ft">MOF <i>文件</i></span><span class="fs">4 KB</span></div>
<div class="row" style="top:70px"><svg class="fi" width="14" height="16" viewBox="0 0 14 16"><use href="#imof"/></svg><span class="fn">DShowRdpFilter.mof</span><span class="fd">2009/6/11 <i>星期</i>...</span><span class="ft">MOF <i>文件</i></span><span class="fs">2 KB</span></div>
<div class="row" style="top:91px"><svg class="fi" width="14" height="16" viewBox="0 0 14 16"><use href="#idll"/></svg><span class="fn">dsprov.dll</span><span class="fd">2010/11/21 <i>星期</i>...</span><span class="ft"><i>应用程序扩展</i></span><span class="fs">156 KB</span></div>
<div class="row" style="top:112px"><svg class="fi" width="14" height="16" viewBox="0 0 14 16"><use href="#imof"/></svg><span class="fn">dsprov.mof</span><span class="fd">2009/7/14 <i>星期</i>...</span><span class="ft">MOF <i>文件</i></span><span class="fs">19 KB</span></div>
<div class="row" style="top:133px"><svg class="fi" width="14" height="16" viewBox="0 0 14 16"><use href="#imof"/></svg><span class="fn">eaimeapi.mof</span><span class="fd">2009/6/11 <i>星期</i>...</span><span class="ft">MOF <i>文件</i></span><span class="fs">2 KB</span></div>
<div class="row" style="top:154px"><svg class="fi" width="14" height="16" viewBox="0 0 14 16"><use href="#idll"/></svg><span class="fn">esscli.dll</span><span class="fd">2009/7/14 <i>星期</i>...</span><span class="ft"><i>应用程序扩展</i></span><span class="fs">430 KB</span></div>
<div class="row" style="top:175px"><svg class="fi" width="14" height="16" viewBox="0 0 14 16"><use href="#idll"/></svg><span class="fn">fastprox.dll</span><span class="fd">2009/7/14 <i>星期</i>...</span><span class="ft"><i>应用程序扩展</i></span><span class="fs">888 KB</span></div>
<div class="row" style="top:196px"><svg class="fi" width="14" height="16" viewBox="0 0 14 16"><use href="#imof"/></svg><span class="fn">fdPHost.mof</span><span class="fd">2009/6/11 <i>星期</i>...</span><span class="ft">MOF <i>文件</i></span><span class="fs">1 KB</span></div>
<div class="row" style="top:217px"><svg class="fi" width="14" height="16" viewBox="0 0 14 16"><use href="#imof"/></svg><span class="fn">fdrespub.mof</span><span class="fd">2009/6/11 <i>星期</i>...</span><span class="ft">MOF <i>文件</i></span><span class="fs">1 KB</span></div>
<div class="row" style="top:238px"><svg class="fi" width="14" height="16" viewBox="0 0 14 16"><use href="#imof"/></svg><span class="fn">fdSSDP.mof</span><span class="fd">2009/6/11 <i>星期</i>...</span><span class="ft">MOF <i>文件</i></span><span class="fs">1 KB</span></div>
<div class="row" style="top:259px"><svg class="fi" width="14" height="16" viewBox="0 0 14 16"><use href="#imof"/></svg><span class="fn">fdWNet.mof</span><span class="fd">2009/6/11 <i>星期</i>...</span><span class="ft">MOF <i>文件</i></span><span class="fs">1 KB</span></div>
<div class="row" style="top:280px"><svg class="fi" width="14" height="16" viewBox="0 0 14 16"><use href="#imof"/></svg><span class="fn">fdWSD.mof</span><span class="fd">2009/6/11 <i>星期</i>...</span><span class="ft">MOF <i>文件</i></span><span class="fs">1 KB</span></div>
<div class="row" style="top:301px"><svg class="fi" width="14" height="16" viewBox="0 0 14 16"><use href="#imof"/></svg><span class="fn">filetrace.mof</span><span class="fd">2009/7/14 <i>星期</i>...</span><span class="ft">MOF <i>文件</i></span><span class="fs">17 KB</span></div>
<div class="row" style="top:322px"><svg class="fi" width="14" height="16" viewBox="0 0 14 16"><use href="#imof"/></svg><span class="fn">firewallapi.mof</span><span class="fd">2009/6/11 <i>星期</i>...</span><span class="ft">MOF <i>文件</i></span><span class="fs">2 KB</span></div>
<div class="row" style="top:343px"><svg class="fi" width="14" height="16" viewBox="0 0 14 16"><use href="#imof"/></svg><span class="fn">FunDisc.mof</span><span class="fd">2009/6/11 <i>星期</i>...</span><span class="ft">MOF <i>文件</i></span><span class="fs">1 KB</span></div>
<div class="row" style="top:364px"><svg class="fi" width="14" height="16" viewBox="0 0 14 16"><use href="#imof"/></svg><span class="fn">fwcfg.mof</span><span class="fd">2009/6/11 <i>星期</i>...</span><span class="ft">MOF <i>文件</i></span><span class="fs">2 KB</span></div>
<div class="row" style="top:385px"><svg class="fi" width="14" height="16" viewBox="0 0 14 16"><use href="#imof"/></svg><span class="fn">hbaapi.mof</span><span class="fd">2009/7/14 <i>星期</i>...</span><span class="ft">MOF <i>文件</i></span><span class="fs">472 KB</span></div>
<div class="row" style="top:406px"><svg class="fi" width="14" height="16" viewBox="0 0 14 16"><use href="#imof"/></svg><span class="fn">hnetcfg.mof</span><span class="fd">2009/6/11 <i>星期</i>...</span><span class="ft">MOF <i>文件</i></span><span class="fs">9 KB</span></div>
  </div>
  <div id="sb">
   <svg class="abs" style="left:4px;top:8px" width="9" height="6" viewBox="0 0 9 6"><path d="M1 5l3.500-4 3.500 4z" fill="#4d5662"/></svg>
   <div class="abs" style="left:.5px;top:55px;width:14.500px;height:23px;border:1px solid #8f959e;border-radius:2px;background:linear-gradient(90deg,#f4f4f4,#e6e8ec 50%,#d4d8de)">
     <div class="abs" style="left:3px;top:7px;width:7px;height:1px;background:#4a525e;box-shadow:0 3px 0 #4a525e,0 6px 0 #4a525e"></div>
   </div>
   <svg class="abs" style="left:4px;top:408px" width="9" height="6" viewBox="0 0 9 6"><path d="M1 1l3.500 4 3.500-4z" fill="#4d5662"/></svg>
  </div>
 </div>

 <!-- details -->
 <div id="det">
  <svg class="abs" style="left:25px;top:8px" width="32" height="40" viewBox="0 0 32 40"><path d="M.5 .5h20.500l8.500 8.500v29.500h-29z" fill="url(#gpaper)" stroke="#d0d0d0" stroke-width="1"/><path d="M.5 38.500h29v-29.500" fill="none" stroke="#a4a4a4" stroke-width="1"/><path d="M21 .5v8.500h8.500z" fill="#f4f4f4" stroke="#c4c4c4" stroke-width="1"/></svg>
  <span style="left:77px;top:5px;font-size:14px">dimsroam.mof</span>
  <span style="left:77px;top:24px;color:#6d6d6d">MOF <i>文件</i></span>
  <span style="left:172px;top:5px;color:#6d6d6d"><i>修改日期</i>:</span>
  <span style="left:228px;top:5px;color:#1a1a1a">2009/6/11 <i>星期四</i> 5:05</span>
  <span style="left:365px;top:5px;color:#6d6d6d"><i>创建日期</i>:</span>
  <span style="left:421px;top:5px;color:#1a1a1a">2009/6/11 <i>星期四</i> 5:05</span>
  <span style="left:196px;top:24px;color:#6d6d6d"><i>大小</i>:</span>
  <span style="left:228px;top:24px;color:#1a1a1a">1.25 KB</span>
 </div>
</div>

<svg class="abs" style="left:900px;top:331px" width="68" height="68" viewBox="0 0 68 68">
 <defs><radialGradient id="gball" cx=".5" cy=".5" r=".5"><stop offset="0" stop-color="#ffffff"/><stop offset=".72" stop-color="#fbfefb"/><stop offset="1" stop-color="#dcf3de"/></radialGradient></defs>
 <circle cx="34" cy="34" r="32.500" fill="#ffffff" fill-opacity=".55" stroke="#e0e4e8" stroke-opacity=".8" stroke-width=".8"/>
 <path d="M34 3.500a30.500 30.500 0 0 1 30.300 34.200" fill="none" stroke="#4ed968" stroke-width="4"/>
 <circle cx="34" cy="34" r="28.200" fill="url(#gball)" stroke="#2ecc5a" stroke-width="1.200"/>
 <text x="16" y="34.500" font-family="Noto Sans CJK SC,Liberation Sans,sans-serif" font-weight="300" font-size="22.500" fill="#333" letter-spacing="-.3">27</text>
 <text x="41" y="34.500" font-family="Liberation Sans,sans-serif" font-size="11" fill="#333">%</text>
 <path d="M17.400 50.800v-6.500M15 46.800l2.400-2.800 2.400 2.800" fill="none" stroke="#2a8cf0" stroke-width="1.300"/>
 <text x="26.500" y="50.800" font-family="Liberation Sans,sans-serif" font-size="9.500" fill="#222">0K/s</text>
</svg>

<div id="task">
 <!-- start orb -->
 <svg class="abs" style="left:7px;top:-2px" width="42" height="42" viewBox="0 0 42 42">
  <defs>
   <radialGradient id="gorb" cx=".5" cy=".98" r=".95"><stop offset="0" stop-color="#1fe4fa"/><stop offset=".3" stop-color="#0f9ad8"/><stop offset=".6" stop-color="#0b5a9c"/><stop offset="1" stop-color="#2a4a74"/></radialGradient>
   <linearGradient id="gorbh" x1="0" y1="0" x2="0" y2="1"><stop offset="0" stop-color="#dfe8f4" stop-opacity=".85"/><stop offset="1" stop-color="#8fb0d8" stop-opacity=".15"/></linearGradient>
   <linearGradient id="gwr" x1="0" y1="0" x2="1" y2="1"><stop offset="0" stop-color="#e2401a"/><stop offset="1" stop-color="#f8b020"/></linearGradient>
   <linearGradient id="gwg" x1="0" y1="1" x2="1" y2="0"><stop offset="0" stop-color="#c8e07a"/><stop offset="1" stop-color="#3f9a30"/></linearGradient>
   <linearGradient id="gwb" x1="0" y1="1" x2="1" y2="0"><stop offset="0" stop-color="#1a7ad0"/><stop offset="1" stop-color="#b8dcf8"/></linearGradient>
   <linearGradient id="gwy" x1="0" y1="0" x2="1" y2="1"><stop offset="0" stop-color="#fde070"/><stop offset="1" stop-color="#f89a10"/></linearGradient>
  </defs>
  <circle cx="21" cy="21" r="19.500" fill="#c8d6e8" opacity=".55"/>
  <circle cx="21" cy="21" r="18.300" fill="url(#gorb)" stroke="#163a66" stroke-width="1"/>
  <path d="M3.500 17a17.600 17.600 0 0 1 35 0q-17.500-7-35 0z" fill="url(#gorbh)"/>
  <path d="M13.200 11.500c2.500-1.400 5-1.300 7.300 0l-1.800 7c-2.300-1.300-4.700-1.400-7.200 0z" fill="url(#gwr)"/>
  <path d="M22 11.800c2.400 1.300 4.800 1.400 7.300 0l-1.800 7c-2.500 1.400-4.900 1.300-7.300 0z" fill="url(#gwg)"/>
  <path d="M11 20.200c2.500-1.400 4.900-1.300 7.300 0l-1.800 7c-2.400-1.300-4.800-1.400-7.300 0z" fill="url(#gwb)"/>
  <path d="M19.800 20.500c2.400 1.300 4.800 1.400 7.300 0l-1.800 7c-2.500 1.400-4.900 1.300-7.300 0z" fill="url(#gwy)"/>
 </svg>
 <!-- search box -->
 <div class="abs" style="left:59px;top:4px;width:234px;height:30px;background:#fff"></div>
 <svg class="abs" style="left:67px;top:10px" width="20" height="20" viewBox="0 0 20 20">
  <g fill="#2a64f0"><ellipse cx="3" cy="8.200" rx="1.900" ry="2.500" transform="rotate(-15 3 8.200)"/><ellipse cx="7.300" cy="3.800" rx="1.900" ry="2.600"/><ellipse cx="12.700" cy="3.800" rx="1.900" ry="2.600"/><ellipse cx="17" cy="8.200" rx="1.900" ry="2.500" transform="rotate(15 17 8.200)"/>
  <path d="M10 8c2.500 0 3.600 2.200 5.300 4 1.800 1.800 2.200 3.500 1.200 5.200-1 1.600-3 1.600-6.500 1.600s-5.500 0-6.500-1.600c-1-1.700-.6-3.400 1.200-5.200C6.400 10.200 7.500 8 10 8z"/></g>
  <text x="10" y="17.200" font-family="Liberation Sans,sans-serif" font-size="7.500" font-weight="bold" fill="#fff" text-anchor="middle">du</text>
 </svg>
 <svg class="abs" style="left:92px;top:15px" width="13" height="8" viewBox="0 0 13 8"><path d="M1 7l5.500-5.500L12 7" fill="none" stroke="#8a8a8a" stroke-width="1.200"/></svg>
 <svg class="abs" style="left:268px;top:9px" width="21" height="21" viewBox="0 0 21 21">
  <circle cx="8.500" cy="9" r="5" fill="none" stroke="#1e9cf0" stroke-width="3.400"/><path d="M12.300 13.300l4.200 4.700" stroke="#1e9cf0" stroke-width="2.800" stroke-linecap="round"/>
  <path d="M14.500 5.500h4M15.800 9h2.700M14.500 12.300h2" stroke="#1e9cf0" stroke-width="1.700" stroke-linecap="round"/><circle cx="18.500" cy="2.500" r="1" fill="#1e9cf0"/>
 </svg>
 <!-- green e -->
 <svg class="abs" style="left:314px;top:3px" width="32" height="32" viewBox="0 0 48 48">
  <circle cx="24" cy="24.500" r="23" fill="#fff"/><circle cx="24" cy="24.500" r="18.500" fill="none" stroke="#34c010" stroke-width="3.600"/>
  <path d="M38 25.500H17.500c.6 4.200 3.400 6.800 7.300 6.800 2.800 0 4.900-1.100 6.300-3.200l4.600 2.600c-2.400 3.800-6.200 5.800-11 5.800-7.400 0-12.800-5.200-12.800-12.600S17 12 24.300 12c7.400 0 13.700 5.500 13.700 13.500zM17.800 21H31c-.9-2.800-3.300-4.500-6.600-4.500s-5.700 1.700-6.600 4.500z" fill="#34c010"/>
 </svg>
 <!-- explorer button -->
 <div class="abs" style="left:419px;top:0;width:3px;height:39px;border:1px solid #5e6e86;border-left:0;border-radius:0 3px 3px 0;background:linear-gradient(180deg,#d4e0ee,#b6c8de)"></div>
 <div class="abs" style="left:362px;top:0;width:56px;height:39px;border:1px solid #5e6e86;border-radius:3px;background:linear-gradient(180deg,#dde7f3 0%,#c9d8ea 45%,#b4c8e0 55%,#bdcfe4 100%);box-shadow:inset 0 0 0 1px rgba(255,255,255,.6)"></div>
 <svg class="abs" style="left:372px;top:4px" width="36" height="32" viewBox="0 0 36 32">
  <path d="M2.500 3.500h10l2 3h15a1.500 1.500 0 0 1 1.500 1.500v19h-28.500z" fill="#e8c860" stroke="#b8963a" stroke-width=".8"/>
  <rect x="4" y="3" width="3" height="2" fill="#2fb84a"/><rect x="11" y="5.500" width="3" height="2" fill="#e03a2a"/><rect x="18.500" y="8" width="3" height="2" fill="#2a7ae0"/>
  <path d="M2 9.500h14l2 2.500h15.500v15.500h-31.500z" fill="#f8e6a0" stroke="#c8a84a" stroke-width=".8"/>
  <path d="M6 17.500a2 2 0 0 1 2-2h18a2 2 0 0 1 2 2v11.500h-5v-7h-12v7h-5z" fill="#9fd0f0" stroke="#4f8fc8" stroke-width=".9"/>
  <path d="M6.500 19.500h21" stroke="#e8f6ff" stroke-width="1.400"/>
  <path d="M10 13v7M6.500 16.500h7" stroke="#fff" stroke-width="1" opacity=".9"/>
 </svg>
 <!-- tray -->
 <svg class="abs" style="left:795px;top:8px" width="17" height="16" viewBox="0 0 17 16"><path d="M3 4c3 0 4-1 5-3" fill="none" stroke="#d8d4c8" stroke-width="1"/><rect x=".8" y="4.500" width="15" height="10" rx="1.500" fill="#8a8e90" stroke="#e2ded2" stroke-width="1.200"/><path d="M3 7.500h11M3 9.800h11" stroke="#e2ded2" stroke-width="1.200" stroke-dasharray="1.500 1"/><path d="M4.500 12.300h8" stroke="#e2ded2" stroke-width="1.200"/></svg>
 <div class="abs" style="left:827px;top:19px;width:0;height:0;border-bottom:5px solid #fff;border-left:4.500px solid transparent;border-right:4.500px solid transparent"></div>
 <svg class="abs" style="left:847px;top:11px" width="18" height="18" viewBox="0 0 18 18"><rect x="5.500" y="2.500" width="11" height="9.500" fill="#5a6a80" stroke="#fff" stroke-width="1.200"/><path d="M8 15.500h7M11 12v3.500" stroke="#fff" stroke-width="1.400"/><path d="M2.500 1v4M5 1v4M1.500 5h4.500v3h-4.500zM3.700 8v6.500h4" fill="none" stroke="#fff" stroke-width="1.200"/></svg>
 <!-- show desktop -->
 <div class="abs" style="left:1011px;top:0;width:13px;height:39px;border-left:1px solid #5f6f88;background:linear-gradient(180deg,rgba(255,255,255,.35),rgba(255,255,255,.1));box-shadow:inset 1px 0 0 rgba(255,255,255,.4)"></div>
</div>

<svg class="abs" style="left:846px;top:712px" width="80" height="56" viewBox="0 0 80 56">
 <!-- hidden tray speaker behind logo -->
 <path d="M24.500 36.500h3l5-5v14l-5-5h-3z" fill="#6a7a92" stroke="#fff" stroke-width="1"/>
 <path d="M33.500 36l2.200 4M36.800 35.500l2 3.600" stroke="#e02a1a" stroke-width="1.500"/>
 <g fill="#fff">
  <path d="M3 27.400L46.900 3.800 60.300 16.800H48.400L43.700 13.200 18 27.200v1.500H3z"/>
  <path d="M16.800 27h6.600v19h11v-21h-11v-2h11.500L59.500 16.800v4.400L38.300 27.500v5L58.800 26v4.200L38.300 36.500v4.300L57.200 34.600v4.200L38.300 45v1.500L56.200 42v4L37.600 50.200H22a5.200 5.200 0 0 1-5.200-5.200z"/>
  <path d="M57.500 18.500l4-1.200v3.800l-4 1.200zM65.500 16.500l3.500-1v3.600l-3.500 1zM61.500 21l4-1.200v3.800l-4 1.200zM69 19l3.500-1v3.500l-3.500 1zM57.500 26l4-1.200v3.800l-4 1.200zM65.500 23.800l3.500-1v3.600l-3.500 1zM61.500 28.500l4-1.200v3.800l-4 1.200zM69 26.500l3.200-1v3.500l-3.200 1zM57 33.500l4-1.200v3.800l-4 1.200zM64.800 31.300l3.500-1v3.600l-3.500 1zM60.500 36.200l4-1.200v3.800l-4 1.200zM68 34l3-1v3.400l-3 1zM55.500 41l4-1.200v3.800l-4 1.200z" opacity=".92"/>
 </g>
</svg>
<div class="abs" style="left:923px;top:721px;width:96px;height:32px;line-height:32px;font-size:23px;font-weight:bold;color:#fff;white-space:nowrap;letter-spacing:0"><i style="font-size:23px">系统之家</i></div>
<div class="abs" style="left:922px;top:753px;width:96px;height:14px;line-height:14px;font-size:9px;color:rgba(230,236,246,.55);white-space:nowrap;font-family:'Liberation Serif',serif;letter-spacing:.4px">XITONGZHIJIA.NET</div>
<div class="abs" style="left:907px;top:751px;width:110px;height:16px;line-height:16px;font-size:12px;color:#fff;white-space:nowrap;letter-spacing:.25px"><span style="font-size:12.500px">2020/9/4</span> <i>星期五</i></div>

<div class="abs" style="left:0;top:0;width:1024px;height:1px;background:#f4f1ea"></div>
<div class="abs" style="left:0;top:0;width:1px;height:771px;background:#6b6a66"></div>
<div class="abs" style="left:0;top:768px;width:1024px;height:1px;background:#6d6d6d"></div>
<div class="abs" style="left:0;top:769px;width:1024px;height:2px;background:#ececec"></div>
</body>
</html>
